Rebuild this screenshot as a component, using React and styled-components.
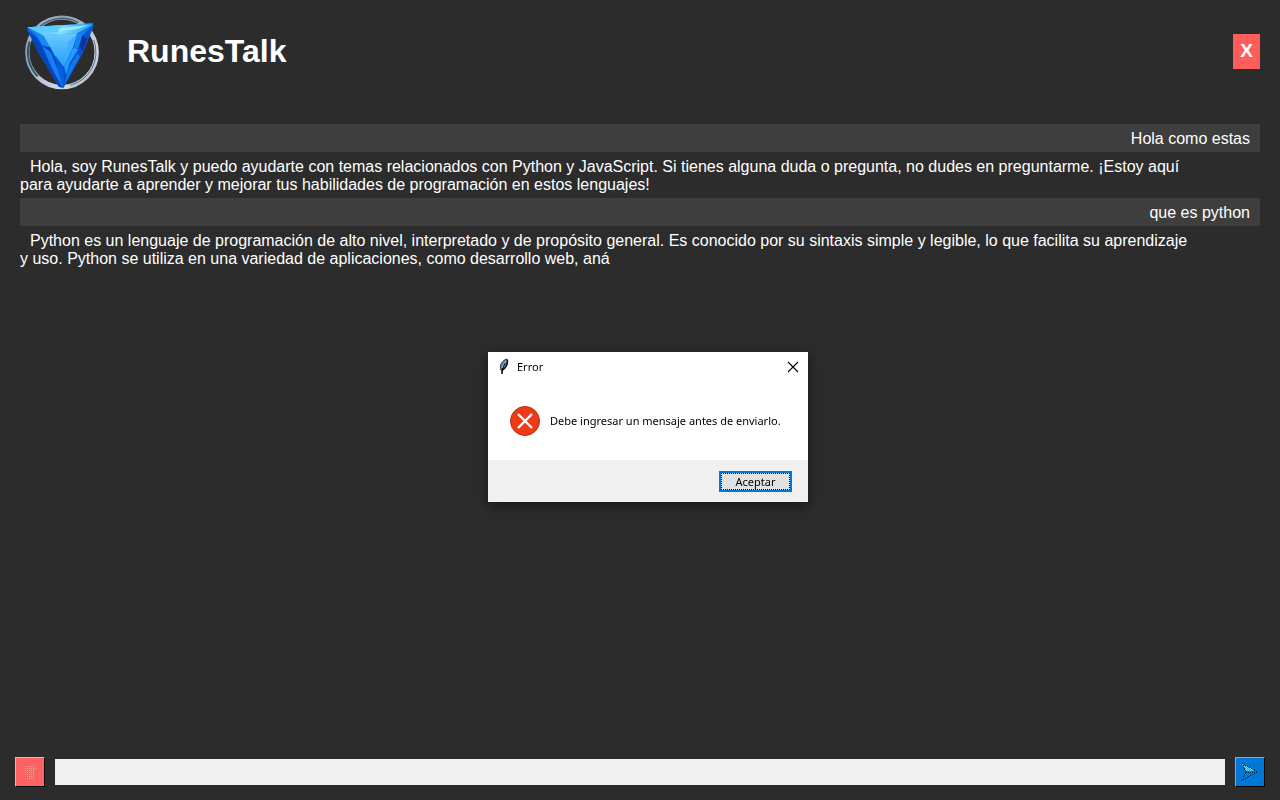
import React, { useState } from "react";
import styled, { createGlobalStyle } from "styled-components";

const GlobalStyle = createGlobalStyle`
  * { box-sizing: border-box; }
  body {
    margin: 0;
    background: #2c2c2c;
    color: #fff;
    font-family: "Liberation Sans", Arial, sans-serif;
  }
`;

const Page = styled.div`
  display: flex;
  flex-direction: column;
  min-height: 100vh;
`;

const Header = styled.header`
  display: flex;
  align-items: center;
  gap: 25px;
  padding: 11px 20px 0 22px;
`;

const Logo = styled.svg`
  width: 80px;
  height: 80px;
`;

const Title = styled.h1`
  flex: 1;
  margin: 0;
  font-size: 32px;
  line-height: 36px;
`;

const ExitButton = styled.button`
  width: 27px;
  height: 35px;
  padding: 0;
  border: 0;
  background: #ff5c5c;
  color: #fff;
  font: bold 19px "Liberation Sans", Arial, sans-serif;
`;

const Chat = styled.main`
  flex: 1;
  padding: 33px 20px 0;
  font-size: 16px;
  line-height: 18px;
`;

const UserMessage = styled.p`
  margin: 0;
  padding: 6px 10px 4px;
  background: #3e3e3e;
  text-align: right;
`;

const BotMessage = styled.p`
  margin: 0;
  padding: 6px 0 4px;
  max-width: 1174px;
  text-indent: 10px;
`;

const Composer = styled.form`
  display: flex;
  align-items: center;
  gap: 10px;
  padding: 0 15px 13px;
`;

const ToolButton = styled.button`
  display: flex;
  align-items: center;
  justify-content: center;
  width: 30px;
  height: 30px;
  padding: 0;
  border: 1px solid;
  border-color: ${(p) => p.$light} #000 #000 ${(p) => p.$light};
  background: ${(p) => p.$color};
`;

const MessageInput = styled.input`
  flex: 1;
  min-width: 0;
  height: 26px;
  padding: 0 4px;
  border: 0;
  outline: 0;
  background: #f0f0f0;
  font: 16px "Liberation Sans", Arial, sans-serif;
`;

const Overlay = styled.div`
  position: fixed;
  inset: 0;
  display: flex;
  align-items: center;
  justify-content: center;
  padding: 54px 0 0 16px;
`;

const Dialog = styled.section`
  width: 320px;
  background: #fff;
  color: #000;
  font: 11px/16px "Noto Sans", "Open Sans", sans-serif;
  box-shadow: 0 3px 12px rgba(0, 0, 0, 0.5);
`;

const TitleBar = styled.div`
  display: flex;
  align-items: center;
  gap: 7px;
  height: 29px;
  padding: 0 9px 0 10px;
`;

const DialogTitle = styled.h2`
  flex: 1;
  margin: 0;
  font-size: 11px;
  font-weight: 400;
`;

const CloseButton = styled.button`
  display: flex;
  padding: 0;
  border: 0;
  background: none;
`;

const DialogBody = styled.div`
  display: flex;
  align-items: center;
  gap: 9px;
  height: 79px;
  padding: 0 20px 0 21px;
`;

const DialogText = styled.p`
  margin: 0;
  white-space: nowrap;
`;

const DialogFooter = styled.div`
  display: flex;
  align-items: center;
  justify-content: flex-end;
  height: 42px;
  padding: 0 16px;
  background: #f0f0f0;
`;

const AcceptButton = styled.button`
  width: 73px;
  height: 21px;
  padding: 0;
  border: 2px solid #0078d7;
  background: #e1e1e1;
  color: #000;
  font: 11px/15px "Noto Sans", "Open Sans", sans-serif;
  outline: 1px dotted #000;
  outline-offset: -3px;
`;

const messages = [
  { from: "user", text: "Hola como estas" },
  {
    from: "bot",
    text: "Hola, soy RunesTalk y puedo ayudarte con temas relacionados con Python y JavaScript. Si tienes alguna duda o pregunta, no dudes en preguntarme. ¡Estoy aquí para ayudarte a aprender y mejorar tus habilidades de programación en estos lenguajes!",
  },
  { from: "user", text: "que es python" },
  {
    from: "bot",
    text: "Python es un lenguaje de programación de alto nivel, interpretado y de propósito general. Es conocido por su sintaxis simple y legible, lo que facilita su aprendizaje y uso. Python se utiliza en una variedad de aplicaciones, como desarrollo web, aná",
  },
];

function CrystalLogo() {
  return (
    <Logo viewBox="21 18 240 240" aria-hidden="true">
      <defs>
        <linearGradient id="ring" x1="0" y1="0" x2="1" y2="1">
          <stop offset="0" stopColor="#c3c6d6" />
          <stop offset="0.25" stopColor="#8d9db0" />
          <stop offset="0.5" stopColor="#b4bdcf" />
          <stop offset="0.75" stopColor="#d8dce8" />
          <stop offset="1" stopColor="#98a4b8" />
        </linearGradient>
        <linearGradient id="topFace" x1="0" y1="0" x2="1" y2="0">
          <stop offset="0" stopColor="#42bdfb" />
          <stop offset="0.5" stopColor="#83e2ff" />
          <stop offset="1" stopColor="#209bf0" />
        </linearGradient>
        <linearGradient id="frontFace" x1="0" y1="0" x2="0" y2="1">
          <stop offset="0" stopColor="#6acbff" />
          <stop offset="1" stopColor="#299cf6" />
        </linearGradient>
      </defs>
      <circle cx="141" cy="142" r="104" fill="none" stroke="url(#ring)" strokeWidth="13" />
      <path d="M44 110 A102 102 0 0 0 68 214" fill="none" stroke="#2b5660" strokeWidth="6" />
      <path d="M75 64 A102 102 0 0 1 190 53" fill="none" stroke="#3f5a6a" strokeWidth="4" />
      <path d="M236 105 A102 102 0 0 1 165 241" fill="none" stroke="#56717e" strokeWidth="3" />
      <path d="M37 67 L234 55 L235 66 L204 142 L145 250 L132 246 L70 142 L38 78Z" fill="#0868e4" />
      <path d="M37 67 L234 55 L228 64 L187 85 L82 91Z" fill="url(#topFace)" />
      <path d="M37 67 L150 60 L134 70 L130 82 L90 84Z" fill="#5cccfb" />
      <path d="M134 70 L223 60 L187 72 L130 80Z" fill="#93ecff" />
      <path d="M83 89 L187 85 L174 126 L145 184 L119 151Z" fill="url(#frontFace)" />
      <path d="M39 78 L64 97 L82 124 L106 127 L125 171 L139 246 L132 246 L73 146Z" fill="#0545bd" />
      <path d="M40 70 L82 91 L104 127 L81 119 L66 92Z" fill="#168af5" />
      <path d="M82 124 L107 141 L128 194 L141 245 L109 186Z" fill="#1680f2" />
      <path d="M234 62 L204 142 L145 248 L145 187 L174 129 L190 86Z" fill="#0754d3" />
      <path d="M225 68 L203 91 L192 124 L173 143 L187 87Z" fill="#1285f5" />
      <path d="M202 91 L193 123 L202 138 L217 103Z" fill="#06339f" />
      <path d="M174 130 L190 132 L164 174 L153 208 L147 181Z" fill="#249bf9" />
      <path d="M187 147 L195 154 L150 235 L158 194Z" fill="#1179ed" />
      <path d="M122 153 L145 187 L143 229Z" fill="#075bdb" />
      <path d="M159 112 L144 185 L174 126 L186 86Z" fill="#41adff" />
    </Logo>
  );
}

function TrashIcon() {
  return (
    <svg width="14" height="16" viewBox="0 0 14 16" aria-hidden="true">
      <defs>
        <pattern id="redDots" width="2" height="2" patternUnits="userSpaceOnUse">
          <rect width="1" height="1" fill="#f7a5a0" />
          <rect x="1" y="1" width="1" height="1" fill="#e8706c" />
        </pattern>
      </defs>
      <path d="M1 3 L4 2 L5 1 H10 V2 L13 3 V5 H12 L12 14 L10 16 H5 L3 14 L2 5 H1Z" fill="#e86b68" />
      <path d="M1 3 L4 2 L5 1 H10 V2 L13 3 V5 H12 L12 14 L10 16 H5 L3 14 L2 5 H1Z" fill="url(#redDots)" />
    </svg>
  );
}

function SendIcon() {
  return (
    <svg width="20" height="20" viewBox="0 0 20 20" shapeRendering="crispEdges" aria-hidden="true">
      <defs>
        <pattern id="cyanDots" width="2" height="2" patternUnits="userSpaceOnUse">
          <rect width="2" height="2" fill="#1b9de4" />
          <rect width="1" height="1" fill="#6fe6ff" />
          <rect x="1" y="1" width="1" height="1" fill="#6fe6ff" />
        </pattern>
      </defs>
      <path d="M2 2 L16 9 H6Z" fill="url(#cyanDots)" />
      <path d="M2 1 L18 10 L2 18 L6 10Z" fill="none" stroke="#04254f" strokeDasharray="1 1" />
      <path d="M6 10H18" stroke="#04254f" strokeDasharray="1 1" />
    </svg>
  );
}

function FeatherIcon() {
  return (
    <svg width="12" height="17" viewBox="0 0 12 17" aria-hidden="true">
      <path d="M3 12 C1 8 4 2 9 1 C11 4 9 9 5 12Z" fill="#5f86b5" stroke="#2a3646" />
      <path d="M9 2 C10 5 8 9 5 12" fill="none" stroke="#111a26" strokeWidth="1.5" />
      <path d="M7 5 Q4 9 4 16" fill="none" stroke="#000" strokeWidth="1.5" />
      <path d="M8 3 Q5 6 4 10" fill="none" stroke="#a9c6e6" />
    </svg>
  );
}

function ErrorIcon() {
  return (
    <svg width="32" height="32" viewBox="0 0 32 32" aria-hidden="true">
      <circle cx="16" cy="16" r="14.5" fill="#f03a17" stroke="#b62d15" />
      <path d="M9 9L23 23M23 9L9 23" stroke="#fff" strokeWidth="2.4" />
    </svg>
  );
}

export default function App() {
  const [open, setOpen] = useState(true);
  const send = (event) => {
    event.preventDefault();
    setOpen(true);
  };

  return (
    <>
      <GlobalStyle />
      <Page>
        <Header>
          <CrystalLogo />
          <Title>RunesTalk</Title>
          <ExitButton type="button" aria-label="Salir">X</ExitButton>
        </Header>
        <Chat>
          {messages.map(({ from, text }) =>
            from === "user" ? (
              <UserMessage key={text}>{text}</UserMessage>
            ) : (
              <BotMessage key={text}>{text}</BotMessage>
            )
          )}
        </Chat>
        <Composer onSubmit={send}>
          <ToolButton type="button" aria-label="Borrar" $color="#ff6262" $light="#ffaaaa">
            <TrashIcon />
          </ToolButton>
          <MessageInput type="text" aria-label="Mensaje" />
          <ToolButton type="submit" aria-label="Enviar" $color="#0078d7" $light="#65b5f5">
            <SendIcon />
          </ToolButton>
        </Composer>
      </Page>
      {open && (
        <Overlay>
          <Dialog role="alertdialog" aria-labelledby="error-title" aria-describedby="error-text">
            <TitleBar>
              <FeatherIcon />
              <DialogTitle id="error-title">Error</DialogTitle>
              <CloseButton type="button" aria-label="Cerrar" onClick={() => setOpen(false)}>
                <svg width="12" height="12" viewBox="0 0 12 12" aria-hidden="true">
                  <path d="M1 1L11 11M11 1L1 11" stroke="#000" strokeWidth="1.1" />
                </svg>
              </CloseButton>
            </TitleBar>
            <DialogBody>
              <ErrorIcon />
              <DialogText id="error-text">Debe ingresar un mensaje antes de enviarlo.</DialogText>
            </DialogBody>
            <DialogFooter>
              <AcceptButton type="button" onClick={() => setOpen(false)}>Aceptar</AcceptButton>
            </DialogFooter>
          </Dialog>
        </Overlay>
      )}
    </>
  );
}
